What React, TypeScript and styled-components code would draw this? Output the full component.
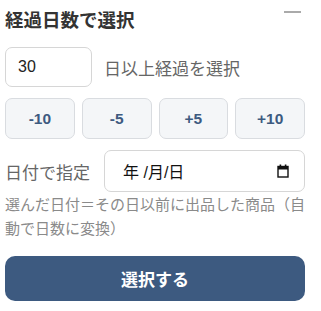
import React, { useState } from 'react';
import styled, { createGlobalStyle } from 'styled-components';

const GlobalStyle = createGlobalStyle`
  body {
    margin: 0;
    background: #fff;
    font-family: "Liberation Sans", "Noto Sans CJK JP", sans-serif;
  }
`;

const Panel = styled.div`
  width: 300px;
  padding: 5px;
  display: flex;
  flex-direction: column;
`;

const Header = styled.div`
  display: flex;
  justify-content: space-between;
  align-items: center;
  height: 28px;
  margin-bottom: 14px;
`;

const Title = styled.h2`
  margin: 0;
  font-size: 18.5px;
  font-weight: 700;
  color: #333;
`;

const Collapse = styled.span`
  width: 17px;
  height: 2px;
  background: #aaa;
  margin-right: 4px;
  align-self: flex-start;
  margin-top: 6px;
`;

const Row = styled.div`
  display: flex;
  align-items: center;
  gap: 12px;
`;

const DaysInput = styled.input`
  box-sizing: border-box;
  width: 87px;
  height: 40px;
  padding: 0 12px;
  border: 1px solid #d6d6d6;
  border-radius: 7px;
  font-family: inherit;
  font-size: 16px;
  color: #222;
  outline: none;
`;

const Label = styled.span`
  font-size: 17px;
  color: #666;
`;

const StepRow = styled.div`
  display: grid;
  grid-template-columns: repeat(4, 1fr);
  gap: 7px;
  margin-top: 11px;
`;

const StepButton = styled.button`
  height: 41px;
  border: 1px solid #d9dce0;
  border-radius: 7px;
  background: #f4f6f8;
  color: #3d5a80;
  font-family: inherit;
  font-size: 15.5px;
  font-weight: 700;
`;

const DateRow = styled(Row)`
  margin-top: 11px;
  gap: 14px;
`;

const DateBox = styled.div`
  box-sizing: border-box;
  flex: 1;
  height: 42px;
  border: 1px solid #d6d6d6;
  border-radius: 7px;
  display: flex;
  align-items: center;
  justify-content: space-between;
  padding: 0 15px 0 18px;
  font-size: 16px;
  color: #111;
`;

const Help = styled.p`
  margin: 1px 0 0;
  font-size: 15px;
  line-height: 24px;
  color: #8a8a8a;
`;

const Submit = styled.button`
  margin-top: 15px;
  height: 45px;
  border: none;
  border-radius: 10px;
  background: #3d5a80;
  color: #fff;
  font-family: inherit;
  font-size: 17px;
  font-weight: 700;
`;

const CalendarIcon = () => (
  <svg width="12" height="14" viewBox="0 0 12 14">
    <rect x="1" y="2.5" width="10" height="10.5" fill="none" stroke="#111" strokeWidth="1.4" />
    <rect x="1" y="2.5" width="10" height="3" fill="#111" />
    <rect x="2.6" y="0.5" width="1.6" height="3" fill="#111" />
    <rect x="7.8" y="0.5" width="1.6" height="3" fill="#111" />
  </svg>
);

const App: React.FC = () => {
  const [days, setDays] = useState('30');
  const steps = [-10, -5, 5, 10];

  return (
    <>
      <GlobalStyle />
      <Panel>
        <Header>
          <Title>経過日数で選択</Title>
          <Collapse />
        </Header>
        <Row>
          <DaysInput value={days} onChange={e => setDays(e.target.value)} />
          <Label>日以上経過を選択</Label>
        </Row>
        <StepRow>
          {steps.map(s => (
            <StepButton key={s} onClick={() => setDays(String(Math.max(0, Number(days) + s)))}>
              {s > 0 ? `+${s}` : s}
            </StepButton>
          ))}
        </StepRow>
        <DateRow>
          <Label>日付で指定</Label>
          <DateBox>
            <span>年 /月/日</span>
            <CalendarIcon />
          </DateBox>
        </DateRow>
        <Help>選んだ日付＝その日以前に出品した商品（自動で日数に変換）</Help>
        <Submit>選択する</Submit>
      </Panel>
    </>
  );
};

export default App;
